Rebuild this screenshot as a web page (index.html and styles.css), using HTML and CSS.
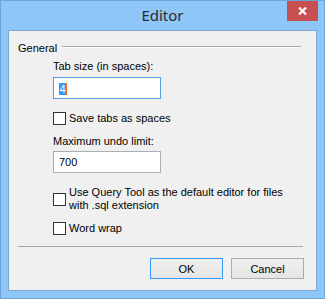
FILE: index.html
```html
<!DOCTYPE html>
<html lang="en">
<head>
    <meta charset="UTF-8">
    <title>Editor</title>
    <link rel="stylesheet" href="styles.css">
</head>
<body>
<div class="window">
    <div class="titlebar">
        <span></span>
        <span class="title">Editor</span>
        <button class="close" title="Close">
            <svg width="9" height="8" viewBox="0 0 9 8">
                <path d="M1 0.5 L8 7.5 M8 0.5 L1 7.5" stroke="#fff" stroke-width="2.2"/>
            </svg>
        </button>
    </div>
    <div class="client">
        <div class="group-head">
            <span>General</span>
            <span class="rule"></span>
        </div>
        <div class="group-body">
            <label class="field-label first">Tab size (in spaces):</label>
            <div class="textbox focused"><span class="sel">4</span><span class="caret"></span></div>
            <label class="check first-check"><span class="box"></span><span>Save tabs as spaces</span></label>
            <label class="field-label second">Maximum undo limit:</label>
            <div class="textbox">700</div>
            <label class="check two"><span class="box"></span><span>Use Query Tool as the default editor for files<br>with .sql extension</span></label>
            <label class="check last-check"><span class="box"></span><span>Word wrap</span></label>
        </div>
        <div class="separator"></div>
        <div class="buttons">
            <button class="btn default">OK</button>
            <button class="btn">Cancel</button>
        </div>
    </div>
</div>
</body>
</html>
```

FILE: styles.css
```css
body {
    margin: 0;
    font-family: "Liberation Sans", Arial, sans-serif;
    font-size: 11px;
    color: #000;
}

.window {
    width: 325px;
    height: 299px;
    box-sizing: border-box;
    border: 1px solid #6fa3d9;
    background: #8ec6f7;
}

.titlebar {
    height: 29px;
    display: grid;
    grid-template-columns: 1fr auto 1fr;
}

.title {
    font-family: "Noto Sans", sans-serif;
    font-size: 15px;
    line-height: 28px;
    color: #2b2b2b;
}

.close {
    justify-self: end;
    align-self: start;
    width: 31px;
    height: 20px;
    margin-right: 6px;
    padding: 0;
    border: none;
    background: #c75050;
    display: flex;
    align-items: center;
    justify-content: center;
}

.close svg {
    display: block;
}

.client {
    margin: 0 7px;
    height: 261px;
    box-sizing: border-box;
    border: 1px solid #7fa7d3;
    background: #f0f0f0;
    padding: 11px 13px 0 9px;
}

.group-head {
    display: flex;
    line-height: 13px;
}

.rule {
    flex: 1;
    height: 0;
    border-top: 1px solid #a8a8a8;
    border-bottom: 1px solid #fff;
    margin: 4px 2px 0 5px;
}

.group-body {
    padding-left: 35px;
    display: flex;
    flex-direction: column;
    align-items: flex-start;
}

.field-label {
    display: block;
    line-height: 13px;
}

.field-label.first {
    margin-top: 5px;
}

.field-label.second {
    margin-top: 10px;
}

.textbox {
    width: 108px;
    height: 22px;
    box-sizing: border-box;
    border: 1px solid #abadb3;
    background: #fff;
    padding-left: 5px;
    line-height: 20px;
    margin-top: 3px;
}

.textbox.focused {
    border-color: #569de5;
    margin-top: 4px;
}

.sel {
    display: inline-block;
    vertical-align: middle;
    background: #3399ff;
    color: #fff;
    line-height: 12px;
    padding: 0 0.5px;
}

.caret {
    display: inline-block;
    vertical-align: middle;
    width: 1px;
    height: 12px;
    background: #e0701f;
}

.check {
    display: flex;
    align-items: center;
    line-height: 13px;
}

.check .box {
    width: 13px;
    height: 13px;
    box-sizing: border-box;
    border: 1px solid #333;
    background: #fff;
    margin-right: 3px;
    flex: none;
}

.first-check {
    margin-top: 13px;
}

.check.two {
    margin-top: 13px;
}

.last-check {
    margin-top: 10px;
}

.separator {
    margin-top: 11px;
    height: 0;
    border-top: 1px solid #a8a8a8;
}

.buttons {
    margin-top: 11px;
    margin-right: -1px;
    display: flex;
    justify-content: flex-end;
    gap: 8px;
}

.btn {
    width: 73px;
    height: 21px;
    box-sizing: border-box;
    border: 1px solid #acacac;
    background: linear-gradient(#f0f0f0, #e5e5e5);
    font-family: "Liberation Sans", Arial, sans-serif;
    font-size: 11px;
    color: #000;
    padding: 0;
}

.btn.default {
    border-color: #3399ff;
}
```
